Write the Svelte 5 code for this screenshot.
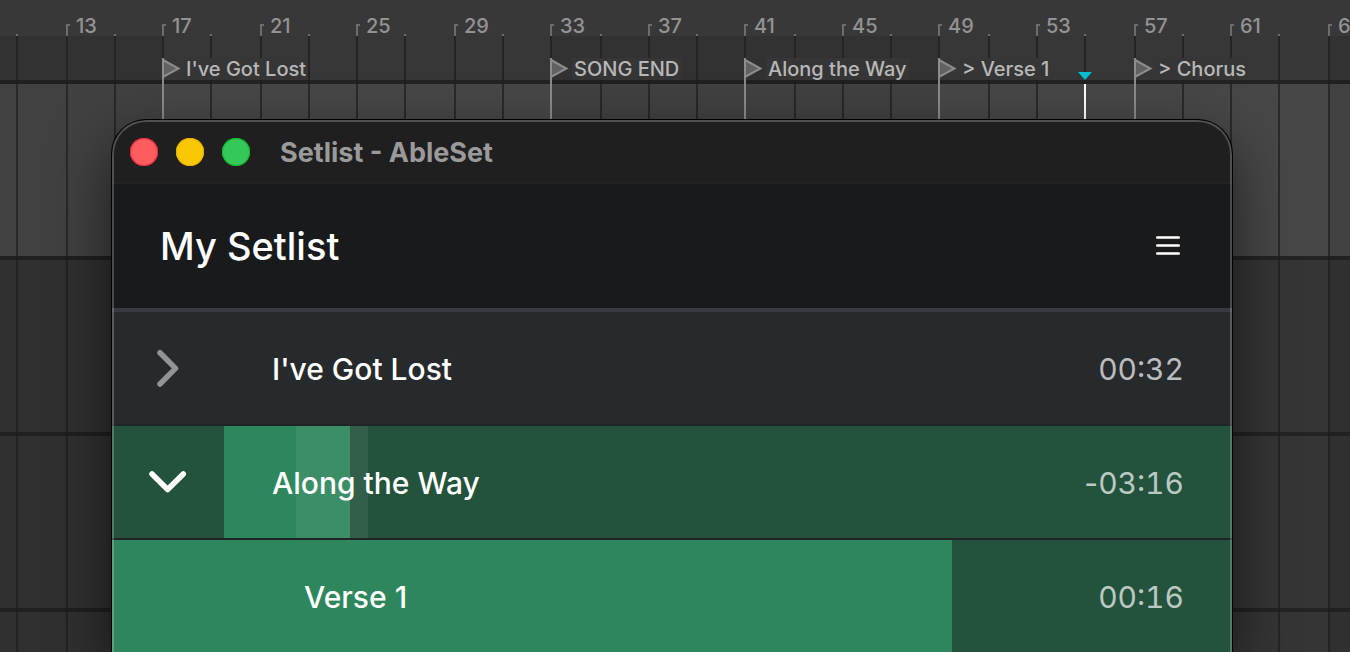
<script>
	const FIRST_BAR = 13;
	const BAR_WIDTH = 24.27;
	const ORIGIN = 66.2;

	let innerWidth = $state(1350);

	// Snap to even pixels so that every line stays two full pixels wide
	const barX = (bar) => Math.floor((ORIGIN + (bar - FIRST_BAR) * BAR_WIDTH) / 2) * 2;

	const range = (from, to, step) =>
		Array.from({ length: Math.floor((to - from) / step) + 1 }, (_, i) => from + i * step);

	let lastBar = $derived(FIRST_BAR + Math.floor((innerWidth - ORIGIN) / BAR_WIDTH));
	let gridBars = $derived(range(11, lastBar, 2));
	let majorBars = $derived(range(13, lastBar, 4));
	let minorBars = $derived(range(11, lastBar, 4));
	let shadedBars = $derived(range(1, lastBar, 32));

	const tracks = ["first", "empty", "empty", "empty"];

	const locators = [
		{ bar: 17, name: "I've Got Lost" },
		{ bar: 33, name: "SONG END" },
		{ bar: 41, name: "Along the Way" },
		{ bar: 49, name: "> Verse 1" },
		{ bar: 57, name: "> Chorus" },
	];

	const playhead = 55;

	let songs = $state([
		{ title: "I've Got Lost", time: "00:32", open: false, active: false },
		{
			title: "Along the Way",
			sign: "-",
			time: "03:16",
			open: true,
			active: true,
			progress: 12.5,
			section: { start: 7.143, length: 7.143 },
			sections: [{ title: "Verse 1", time: "00:16", progress: 75 }],
		},
	]);
</script>

<svelte:window bind:innerWidth />

<main>
	<div class="arrangement">
		<div class="ruler">
			{#each majorBars as bar}
				<span class="bar" style="left: {barX(bar)}px">{bar}</span>
			{/each}
			{#each minorBars as bar}
				<i class="tick" style="left: {barX(bar)}px"></i>
			{/each}
		</div>
		<div class="locator-lane"></div>
		{#each tracks as track}
			<div class="track {track}"></div>
		{/each}

		{#each shadedBars as bar}
			<i class="shade" style="left: {barX(bar)}px; width: {barX(bar + 16) - barX(bar)}px"></i>
		{/each}
		{#each gridBars as bar}
			<i class="grid-line" style="left: {barX(bar)}px"></i>
		{/each}
		{#each locators as locator}
			<div class="locator" style="left: {barX(locator.bar)}px">
				<svg width="20" height="20" viewBox="0 0 20 20" aria-hidden="true">
					<path d="M1 2 16.5 10.5 1 19z" />
				</svg>
				<span>{locator.name}</span>
			</div>
		{/each}
		<div class="playhead" style="left: {barX(playhead)}px"></div>
	</div>

	<section class="window">
		<div class="titlebar">
			<div class="lights">
				<button class="close" aria-label="Close"></button>
				<button class="minimize" aria-label="Minimize"></button>
				<button class="zoom" aria-label="Zoom"></button>
			</div>
			<span class="title">Setlist - AbleSet</span>
		</div>

		<header>
			<h1>My Setlist</h1>
			<button class="menu" aria-label="Menu">
				<svg width="24" height="20" viewBox="0 0 24 20" aria-hidden="true">
					<path d="M1.3 1.5h21.4M1.3 9.5h21.4M1.3 17.5h21.4" />
				</svg>
			</button>
		</header>

		<div class="songs">
			{#each songs as song}
				<div class="row" class:active={song.active}>
					<button
						class="toggle"
						class:open={song.open}
						aria-label="Toggle sections"
						aria-expanded={song.open}
						onclick={() => (song.open = !song.open)}
					>
						<svg width="40" height="40" viewBox="0 0 40 40" aria-hidden="true">
							<path d="M12 4.7 27.5 20.4 12 36" />
						</svg>
					</button>
					<div class="body">
						{#if song.active}
							<i class="fill" style="width: {song.progress}%"></i>
							<i
								class="current"
								style="left: {song.section.start}%; width: {song.section.length}%"
							></i>
						{/if}
						<span class="name">{song.title}</span>
						<time><span class="sign">{song.sign}</span>{song.time}</time>
					</div>
				</div>
				{#if song.open}
					{#each song.sections ?? [] as section}
						<div class="row active">
							<div class="body section">
								<i class="fill" style="width: {section.progress}%"></i>
								<span class="name">{section.title}</span>
								<time>{section.time}</time>
							</div>
						</div>
					{/each}
				{/if}
			{/each}
		</div>
	</section>
</main>

<style>
	:global(body) {
		margin: 0;
		background: #333;
	}

	main {
		position: relative;
		display: flex;
		box-sizing: border-box;
		height: 100vh;
		padding: 120px 118px 0 112px;
		overflow: hidden;
		font-family: Inter, "Liberation Sans", sans-serif;
	}

	button {
		margin: 0;
		padding: 0;
		border: 0;
		background: none;
	}

	svg {
		display: block;
		fill: none;
	}

	/* Arrangement view behind the window */
	.arrangement {
		position: absolute;
		inset: 0;
		overflow: hidden;
		color: #939393;
		font-size: 20px;
		font-weight: 500;
		line-height: 22px;
	}

	.ruler {
		position: relative;
		height: 36px;
		background: #383838;
	}

	.bar {
		position: absolute;
		top: 15px;
		padding-left: 10px;
	}

	.bar::before {
		content: "";
		position: absolute;
		top: 9px;
		left: 0;
		width: 2px;
		height: 10px;
		border: solid #6d6d6d;
		border-width: 2px 0 0 2px;
	}

	.tick {
		position: absolute;
		top: 34px;
		width: 2px;
		height: 2px;
		background: #6d6d6d;
	}

	.locator-lane {
		height: 44px;
		border-bottom: 4px solid #232323;
		background: #373737;
	}

	.track {
		height: 172px;
		border-bottom: 4px solid #232323;
		background: #353535;
	}

	.track.first {
		background: #474747;
	}

	.shade {
		position: absolute;
		top: 36px;
		bottom: 0;
		background: rgb(0 0 0 / 8%);
	}

	.grid-line {
		position: absolute;
		top: 36px;
		bottom: 0;
		width: 2px;
		background: rgb(30 30 30 / 70%);
	}

	.locator {
		position: absolute;
		top: 58px;
		display: flex;
		align-items: flex-start;
		height: 62px;
		border-left: 2px solid #8a8a8a;
		color: #b8b8b8;
		white-space: pre;
	}

	.locator svg {
		margin-left: -2px;
		fill: #616161;
		stroke: #8d8d8d;
		stroke-width: 2;
	}

	.locator span {
		margin-left: 2px;
		padding: 1px 2px 0;
		background: #363636;
		line-height: 21px;
	}

	.playhead {
		position: absolute;
		top: 84px;
		width: 2px;
		height: 36px;
		background: #fff;
	}

	.playhead::before {
		content: "";
		position: absolute;
		top: -12px;
		left: -6px;
		border: solid transparent;
		border-width: 8px 7px 0;
		border-top-color: #00c0d4;
	}

	/* Setlist window */
	.window {
		position: relative;
		flex: 1;
		border-radius: 34px 34px 0 0;
		background: #191a1c;
		box-shadow:
			0 0 0 1px #000,
			0 24px 60px rgb(0 0 0 / 60%);
		overflow: hidden;
	}

	.window::after {
		content: "";
		position: absolute;
		inset: 0;
		border: solid rgb(255 255 255 / 22%);
		border-width: 2px 2px 0;
		border-radius: inherit;
		pointer-events: none;
	}

	.titlebar {
		display: flex;
		align-items: center;
		gap: 30px;
		height: 62px;
		padding: 2px 18px 0;
		box-sizing: border-box;
		background: #1f1f1f;
	}

	.lights {
		display: flex;
		gap: 18px;
	}

	.lights button {
		width: 28px;
		height: 28px;
		border-radius: 50%;
	}

	.close {
		background: #ff5c5f;
		box-shadow: inset 0 0 0 1px #f2273b;
	}

	.minimize {
		background: #fac800;
		box-shadow: inset 0 0 0 1px #e6ae00;
	}

	.zoom {
		background: #34c759;
		box-shadow: inset 0 0 0 1px #12b524;
	}

	.title {
		color: #9a9a9a;
		font-size: 27px;
		font-weight: 700;
	}

	header {
		display: flex;
		align-items: center;
		justify-content: space-between;
		height: 124px;
		padding: 0 52px 0 48px;
		border-top: 2px solid #232323;
		border-bottom: 4px solid #373a42;
	}

	h1 {
		margin: 0;
		color: #fff;
		font-size: 38px;
		font-weight: 500;
	}

	.menu svg {
		stroke: #fff;
		stroke-width: 2.6;
		stroke-linecap: round;
	}

	.row {
		display: flex;
		height: 112px;
		border-bottom: 2px solid #212427;
		background: #272a2d;
		font-size: 30px;
	}

	.row.active {
		background: #24533d;
	}

	.toggle {
		display: grid;
		place-items: center;
		width: 112px;
	}

	.toggle svg {
		stroke: #929394;
		stroke-width: 5.5;
		stroke-linecap: round;
		stroke-linejoin: round;
	}

	.toggle.open svg {
		stroke: #fff;
		transform: rotate(90deg);
	}

	.body {
		position: relative;
		flex: 1;
		display: flex;
		align-items: center;
		justify-content: space-between;
		padding: 2px 48px 0;
	}

	.body.section {
		padding-left: 192px;
	}

	.fill,
	.current {
		position: absolute;
		top: 0;
		bottom: 0;
		left: 0;
	}

	.fill {
		background: #2e865c;
	}

	.current {
		background: rgb(255 255 255 / 7%);
	}

	.name,
	time {
		position: relative;
	}

	.name {
		color: #fff;
		font-weight: 500;
	}

	time {
		color: rgb(255 255 255 / 70%);
		font-variant-numeric: tabular-nums;
	}

	.sign {
		font-variant-numeric: normal;
	}
</style>
